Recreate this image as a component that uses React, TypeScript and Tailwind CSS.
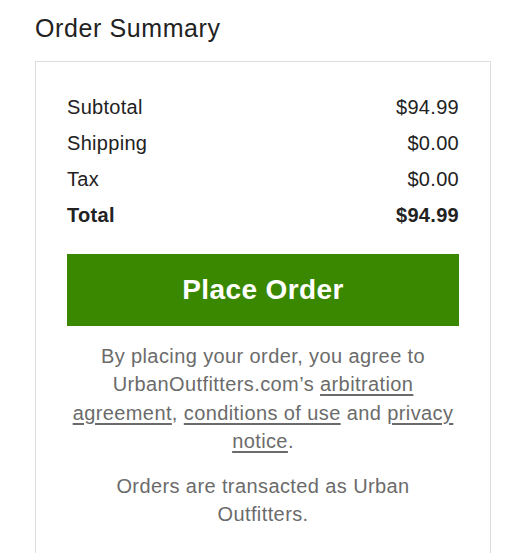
const rows = [
  { label: 'Subtotal', value: '$94.99' },
  { label: 'Shipping', value: '$0.00' },
  { label: 'Tax', value: '$0.00' },
];

const App = () => {
  return (
    <div className="min-h-screen bg-white pl-[35px] pt-[14px] font-['Liberation_Sans',Arial,sans-serif] text-[#222]">
      <h2 className="text-[25px] leading-[28px] tracking-[0.6px]">Order Summary</h2>
      <div className="mt-[19px] w-[456px] border border-[#dcdcdc] px-[31px] pt-[27px] pb-10">
        <div className="text-[20px] leading-[36px] tracking-[0.3px]">
          {rows.map((row) => (
            <div key={row.label} className="flex justify-between">
              <span>{row.label}</span>
              <span>{row.value}</span>
            </div>
          ))}
          <div className="flex justify-between font-bold">
            <span>Total</span>
            <span>$94.99</span>
          </div>
        </div>
        <button className="mt-[21px] flex h-[72px] w-full items-center justify-center bg-[#3a8800] text-[28px] font-bold tracking-[0.4px] text-white">
          Place Order
        </button>
        <div className="mt-[15.5px] px-[3px] text-center text-[20px] leading-[28.5px] tracking-[0.4px] text-[#6b6b6b]">
          <p>
            By placing your order, you agree to UrbanOutfitters.com’s{' '}
            <a href="#" className="underline decoration-[1.5px] underline-offset-[3px]">arbitration agreement</a>,{' '}
            <a href="#" className="underline decoration-[1.5px] underline-offset-[3px]">conditions of use</a> and{' '}
            <a href="#" className="underline decoration-[1.5px] underline-offset-[3px]">privacy notice</a>.
          </p>
          <p className="mt-4">Orders are transacted as Urban Outfitters.</p>
        </div>
      </div>
    </div>
  );
};

export default App;
